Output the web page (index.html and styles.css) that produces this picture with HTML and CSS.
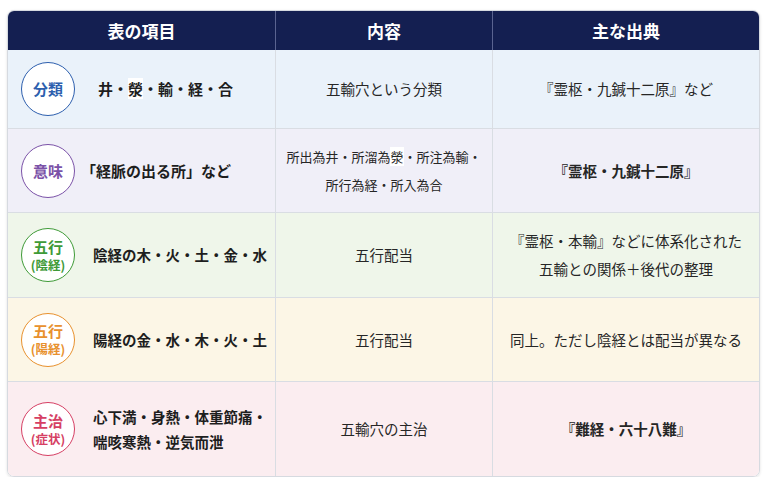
FILE: index.html
```html
<!DOCTYPE html>
<html lang="ja">
<head>
<meta charset="utf-8">
<link rel="stylesheet" href="styles.css">
</head>
<body>
<div class="wrap">
  <table class="tbl">
    <colgroup><col class="c1"><col class="c2"><col class="c3"></colgroup>
    <thead>
      <tr><th>表の項目</th><th>内容</th><th>主な出典</th></tr>
    </thead>
    <tbody>
      <tr class="r-blue">
        <td><div class="item"><span class="badge"><span class="bl">分類</span></span><span class="itxt first">井・<span class="hl">滎</span>・輸・経・合</span></div></td>
        <td class="ctr">五輸穴という分類</td>
        <td class="ctr">『霊枢・九鍼十二原』など</td>
      </tr>
      <tr class="r-purple">
        <td><div class="item"><span class="badge"><span class="bl">意味</span></span><span class="itxt quote">「経脈の出る所」など</span></div></td>
        <td class="ctr small">所出為井・所溜為<span class="hl">滎</span>・所注為輸・<br>所行為経・所入為合</td>
        <td class="ctr b">『霊枢・九鍼十二原』</td>
      </tr>
      <tr class="r-green">
        <td><div class="item"><span class="badge"><span class="bl">五行</span><span class="bl sub">(陰経)</span></span><span class="itxt">陰経の木・火・土・金・水</span></div></td>
        <td class="ctr">五行配当</td>
        <td class="ctr">『霊枢・本輸』などに体系化された<br>五輸との関係＋後代の整理</td>
      </tr>
      <tr class="r-orange">
        <td><div class="item"><span class="badge"><span class="bl">五行</span><span class="bl sub">(陽経)</span></span><span class="itxt">陽経の金・水・木・火・土</span></div></td>
        <td class="ctr">五行配当</td>
        <td class="ctr">同上。ただし陰経とは配当が異なる</td>
      </tr>
      <tr class="r-pink">
        <td><div class="item"><span class="badge"><span class="bl">主治</span><span class="bl sub">(症状)</span></span><span class="itxt tight">心下満・身熱・体重節痛・<br>喘咳寒熱・逆気而泄</span></div></td>
        <td class="ctr">五輸穴の主治</td>
        <td class="ctr b">『難経・六十八難』</td>
      </tr>
    </tbody>
  </table>
</div>
</body>
</html>
```
FILE: styles.css
```css
html, body {
  margin: 0;
  padding: 0;
  background: #ffffff;
}
body {
  font-family: "Noto Sans CJK JP", "Noto Sans", sans-serif;
  color: #222;
}
.wrap {
  padding: 10px 8px 0 7px;
}
.tbl {
  width: 753px;
  border-collapse: separate;
  border-spacing: 0;
  table-layout: fixed;
  border: 1px solid #d6dae0;
  border-radius: 7px;
  overflow: hidden;
  box-shadow: 0 1px 3px rgba(0,0,0,0.12);
}
.c1 { width: 267px; }
.c2 { width: 217px; }
.c3 { width: auto; }
th {
  background: #141f51;
  color: #ffffff;
  font-size: 17px;
  font-weight: 700;
  height: 39px;
  padding: 0;
  text-align: center;
  border-left: 1px solid #5a6390;
}
th:first-child { border-left: none; }
td {
  border-top: 1px solid #d9dde3;
  border-left: 1px solid #d9dde3;
  padding: 0;
  font-size: 14.5px;
  line-height: 28px;
  vertical-align: middle;
  color: #262626;
}
tbody tr:first-child td { border-top: none; }
td:first-child { border-left: none; }
.r-blue td { background: #eaf2fa; height: 78px; }
.r-purple td { background: #f0eff8; height: 83px; }
.r-green td { background: #eff6ea; height: 84px; }
.r-orange td { background: #fcf6e6; height: 83px; }
.r-pink td { background: #fbedf0; height: 94px; }
.ctr { text-align: center; }
.small { font-size: 13px; }
.b { font-weight: 700; }
.item {
  display: flex;
  align-items: center;
  gap: 18px;
  padding-left: 13px;
}
.itxt {
  font-weight: 700;
  font-size: 14.5px;
  color: #1e1e1e;
}
.itxt.first { margin-left: 5px; font-size: 15px; }
.itxt.quote { margin-left: -12px; font-size: 15px; }
.itxt.tight { line-height: 25px; }
.hl { background: #ffffff; }
.badge {
  flex: none;
  width: 52px;
  height: 52px;
  border-radius: 50%;
  border: 1.5px solid #2d5fae;
  background: #ffffff;
  display: flex;
  flex-direction: column;
  align-items: center;
  justify-content: center;
  font-size: 15px;
  font-weight: 700;
  line-height: 18px;
  color: #2d5fae;
}
.bl { display: block; }
.sub { font-size: 12.5px; line-height: 17px; }
.r-purple .badge { border-color: #7b52a8; color: #7b52a8; }
.r-green .badge { border-color: #3e9a37; color: #3e9a37; }
.r-orange .badge { border-color: #e8912e; color: #e8912e; }
.r-pink .badge { border-color: #d63f64; color: #d63f64; }
```
